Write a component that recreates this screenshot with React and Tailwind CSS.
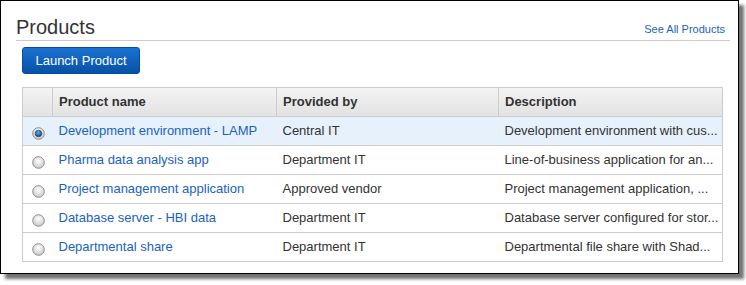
import React from "react";

const rows = [
  { name: "Development environment - LAMP", by: "Central IT", desc: "Development environment with cus...", selected: true },
  { name: "Pharma data analysis app", by: "Department IT", desc: "Line-of-business application for an..." },
  { name: "Project management application", by: "Approved vendor", desc: "Project management application, ..." },
  { name: "Database server - HBI data", by: "Department IT", desc: "Database server configured for stor..." },
  { name: "Departmental share", by: "Department IT", desc: "Departmental file share with Shad..." },
];

function Radio({ checked }) {
  return (
    <svg width="13" height="13" viewBox="0 0 13 13">
      <defs>
        <radialGradient id={checked ? "rgc" : "rgu"} cx="50%" cy="35%" r="65%">
          <stop offset="0%" stopColor="#ffffff" />
          <stop offset="100%" stopColor="#c8c8c8" />
        </radialGradient>
        <radialGradient id="dot" cx="45%" cy="35%" r="60%">
          <stop offset="0%" stopColor="#5fb0f0" />
          <stop offset="100%" stopColor="#0b4f8a" />
        </radialGradient>
      </defs>
      <circle cx="6.5" cy="6.5" r="5.8" fill={`url(#${checked ? "rgc" : "rgu"})`} stroke="#8e8e8e" strokeWidth="1" />
      {checked && <circle cx="6.5" cy="6.5" r="3.3" fill="url(#dot)" stroke="#1d3d5c" strokeWidth="0.6" />}
    </svg>
  );
}

export default function App() {
  return (
    <div className="w-[746px] h-[285px] bg-white" style={{ fontFamily: '"Liberation Sans", Arial, sans-serif' }}>
      <div className="w-[739px] h-[274px] border border-black bg-white shadow-[5px_5px_3px_rgba(0,0,0,0.55)] box-border pt-[14px]">
        <div className="ml-[15px] mr-[8px] flex items-end justify-between border-b border-[#cccccc] pb-[1px]">
          <div className="text-[20px] leading-[24px] text-[#333333]">Products</div>
          <a className="text-[11px] leading-[14px] text-[#1a62c2] mr-[5px] mb-[3px]">See All Products</a>
        </div>
        <div className="ml-[21px] mt-[6px]">
          <button className="h-[27px] w-[118px] rounded-[3px] border border-[#0a4a9c] bg-gradient-to-b from-[#1a73d1] to-[#0651a8] text-white text-[13px] leading-[25px]">
            Launch Product
          </button>
        </div>
        <div className="ml-[21px] mt-[13px] w-[701px]">
          <table className="w-full border-collapse table-fixed text-[13px]">
            <colgroup>
              <col className="w-[30px]" />
              <col className="w-[224px]" />
              <col className="w-[222px]" />
              <col />
            </colgroup>
            <thead>
              <tr className="h-[29px] bg-gradient-to-b from-[#f3f3f3] to-[#e2e2e2]">
                <th className="border border-[#cccccc]"></th>
                <th className="border border-[#cccccc] text-left pl-[6px] font-bold text-[#333333]">Product name</th>
                <th className="border border-[#cccccc] text-left pl-[6px] font-bold text-[#333333]">Provided by</th>
                <th className="border border-[#cccccc] text-left pl-[6px] font-bold text-[#333333]">Description</th>
              </tr>
            </thead>
            <tbody>
              {rows.map((r, i) => (
                <tr key={i} className={`h-[29px] ${r.selected ? "bg-[#e6f1fc]" : "bg-white"}`}>
                  <td className="h-[29px] p-0 border-l border-b border-[#cccccc] pl-[9px] pt-[4px] align-middle">
                    <Radio checked={r.selected} />
                  </td>
                  <td className="h-[29px] py-0 border-b border-[#cccccc] pl-[6px] text-[#1a62c2] whitespace-nowrap">{r.name}</td>
                  <td className="h-[29px] py-0 border-b border-[#cccccc] pl-[6px] text-[#333333] whitespace-nowrap">{r.by}</td>
                  <td className="h-[29px] py-0 border-b border-r border-[#cccccc] pl-[6px] text-[#333333] whitespace-nowrap">{r.desc}</td>
                </tr>
              ))}
            </tbody>
          </table>
        </div>
      </div>
    </div>
  );
}
